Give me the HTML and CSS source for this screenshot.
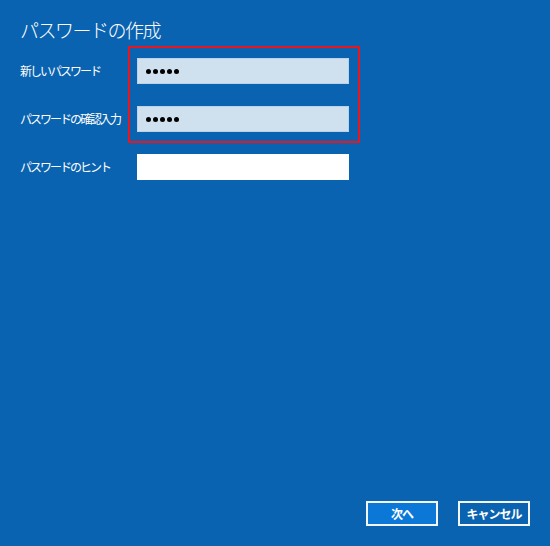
FILE: index.html
```html
<!DOCTYPE html>
<html lang="ja">
<head>
<meta charset="utf-8">
<link rel="stylesheet" href="styles.css">
</head>
<body>
<div class="page">
  <h1 class="title">パスワードの作成</h1>
  <div class="form">
    <div class="label">新しいパスワード</div>
    <div class="field filled"><span class="dot"></span><span class="dot"></span><span class="dot"></span><span class="dot"></span><span class="dot"></span></div>
    <div class="label">パスワードの確認入力</div>
    <div class="field filled"><span class="dot"></span><span class="dot"></span><span class="dot"></span><span class="dot"></span><span class="dot"></span></div>
    <div class="label">パスワードのヒント</div>
    <div class="field empty"></div>
  </div>
  <div class="spacer"></div>
  <div class="buttons">
    <button class="btn primary">次へ</button>
    <button class="btn">キャンセル</button>
  </div>
  <div class="highlight"></div>
</div>
</body>
</html>
```
FILE: styles.css
```css
html, body {
  margin: 0;
  padding: 0;
  height: 100%;
}
body {
  background: #0a63b0;
  font-family: "Noto Sans CJK JP", "Noto Sans", sans-serif;
  color: #ffffff;
}
.page {
  position: relative;
  box-sizing: border-box;
  height: 100vh;
  display: flex;
  flex-direction: column;
  padding: 17px 20px 20px 20px;
}
.title {
  margin: 0;
  font-size: 19px;
  font-weight: 300;
  line-height: 26px;
  letter-spacing: -1.5px;
}
.form {
  margin-top: 15px;
  display: grid;
  grid-template-columns: 117px 212px;
  grid-auto-rows: 26px;
  row-gap: 22px;
  align-items: center;
}
.label {
  font-size: 12px;
  letter-spacing: -2px;
  line-height: 26px;
  white-space: nowrap;
}
.field {
  height: 26px;
  box-sizing: border-box;
  display: flex;
  align-items: center;
  gap: 2px;
  padding-left: 9px;
}
.filled {
  background: #cfe1ef;
  border: 1px solid #bcd3e7;
  padding-left: 8px;
}
.empty {
  background: #ffffff;
}
.dot {
  width: 5px;
  height: 5px;
  border-radius: 50%;
  background: #000000;
}
.spacer {
  flex: 1;
}
.buttons {
  display: flex;
  justify-content: flex-end;
  gap: 20px;
}
.btn {
  width: 72px;
  height: 25px;
  box-sizing: border-box;
  border: 2px solid #f2f6fa;
  background: #0a63b0;
  color: #ffffff;
  font-family: "Noto Sans CJK JP", "Noto Sans", sans-serif;
  font-size: 12px;
  font-weight: 700;
  letter-spacing: -1px;
  padding: 0;
}
.primary {
  background: #0b78d8;
}
.highlight {
  position: absolute;
  left: 128px;
  top: 46px;
  width: 232px;
  height: 97px;
  box-sizing: border-box;
  border: 2px solid #e8161f;
}
```
